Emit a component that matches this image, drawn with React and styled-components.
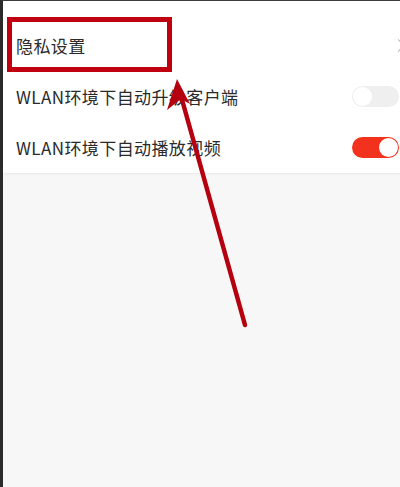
import React from 'react';
import styled, { createGlobalStyle } from 'styled-components';

const GlobalStyle = createGlobalStyle`
  html, body {
    margin: 0;
    padding: 0;
    background: #f7f7f8;
    overflow: hidden;
  }
`;

const Page = styled.div`
  position: relative;
  width: 400px;
  height: 487px;
  box-sizing: border-box;
  border-left: 3px solid #2b2b2b;
  border-top: 1px solid #3a3a3a;
  background: #f7f7f8;
  overflow: hidden;
  font-family: "Noto Sans CJK SC", "Noto Sans", sans-serif;
`;

const Card = styled.div`
  width: 414px;
  background: #fff;
  padding-top: 19px;
  box-shadow: 0 1px 2px rgba(0, 0, 0, 0.06);
`;

const Row = styled.div`
  display: flex;
  align-items: center;
  justify-content: space-between;
  height: 51px;
  padding: 0 14px 0 13px;
`;

const Label = styled.span`
  font-size: 17px;
  color: #2a2a2a;
  letter-spacing: 0.4px;
`;

const Chevron = styled.span`
  display: inline-block;
  width: 8px;
  height: 8px;
  border-top: 1.5px solid #aaa;
  border-right: 1.5px solid #aaa;
  transform: rotate(45deg);
  margin-right: 0;
`;

const Toggle = styled.div`
  position: relative;
  width: 47px;
  height: 21px;
  margin-right: 4px;
  border-radius: 11px;
  background: ${(p) => (p.on ? '#f2321c' : '#efefef')};
  &::after {
    content: '';
    position: absolute;
    top: 1px;
    ${(p) => (p.on ? 'right: 1px;' : 'left: 1px;')}
    width: 19px;
    height: 19px;
    border-radius: 50%;
    background: #fff;
  }
`;

const Overlay = styled.svg`
  position: absolute;
  left: -3px;
  top: -1px;
  width: 400px;
  height: 487px;
  pointer-events: none;
`;

export default function App() {
  return (
    <Page>
      <GlobalStyle />
      <Card>
        <Row>
          <Label>隐私设置</Label>
          <Chevron />
        </Row>
        <Row>
          <Label>WLAN环境下自动升级客户端</Label>
          <Toggle />
        </Row>
        <Row>
          <Label>WLAN环境下自动播放视频</Label>
          <Toggle on />
        </Row>
      </Card>
      <Overlay viewBox="0 0 400 487">
        <rect x="9.5" y="19.5" width="160" height="50" fill="none" stroke="#c00010" strokeWidth="5" />
        <line x1="245" y1="325" x2="181" y2="96" stroke="#b4000f" strokeWidth="4.5" strokeLinecap="round" />
        <polygon points="177,79 190,104 181,99 167,110" fill="#b4000f" />
      </Overlay>
    </Page>
  );
}
